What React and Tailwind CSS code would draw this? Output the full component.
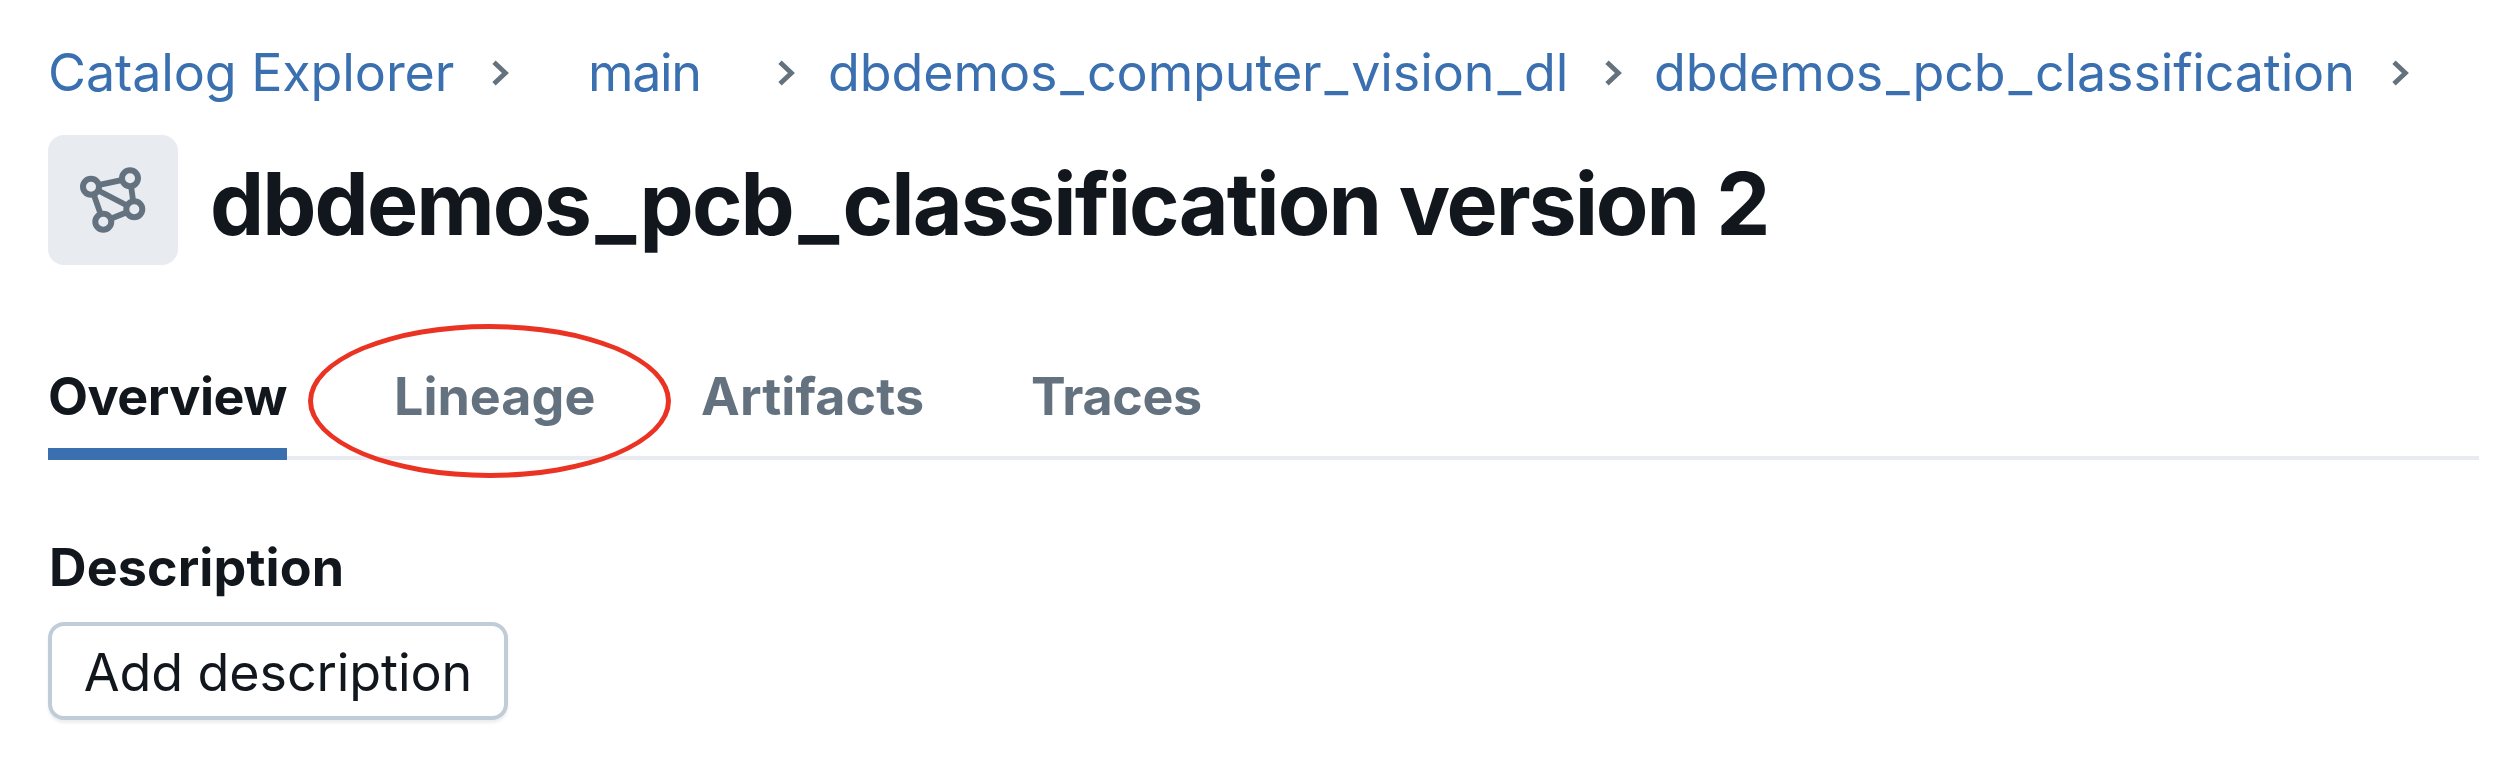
import { Fragment } from "react";

function Chevron() {
  return (
    <svg className="h-[26px] w-[18px] shrink-0" viewBox="0 0 18 26" fill="none" stroke="#64727d" strokeWidth="4.8">
      <path d="M2 2.2 13.4 13 2 23.8" />
    </svg>
  );
}

function ModelIcon() {
  return (
    <div className="h-[130px] w-[130px] shrink-0 rounded-[16px] bg-[#e8ecf0]">
      <svg viewBox="0 0 130 130" className="h-full w-full" stroke="#64727f" fill="none">
        <path strokeWidth="5.8" d="M43 51.7 82 43.3 86.3 74.3 55.3 86.7ZM43 51.7 86.3 74.3" />
        <g fill="#e8ecf0" strokeWidth="6">
          <circle cx="43" cy="51.7" r="8" />
          <circle cx="82" cy="43.3" r="8" />
          <circle cx="86.3" cy="74.3" r="8" />
          <circle cx="55.3" cy="86.7" r="8" />
        </g>
      </svg>
    </div>
  );
}

// Gives the underscores of an identifier a little room on both sides.
function Identifier({ name, gap }) {
  return name.split("_").map((part, i) => (
    <Fragment key={i}>
      {i > 0 && <span className={gap}>_</span>}
      {part}
    </Fragment>
  ));
}

export default function App() {
  return (
    <main className="h-[780px] w-[2512px] overflow-hidden bg-white pl-[48px] pr-[33px] font-['Inter','Liberation_Sans',sans-serif] text-[52px] text-[#11171c]">
      <nav className="flex h-[135px] items-center whitespace-nowrap pt-[10px] text-[#3a6fb0]">
        <a className="w-[444px] tracking-[-0.1px]">Catalog Explorer</a>
        <Chevron />
        <a className="ml-[78px] w-[190px] tracking-[-1.4px]">main</a>
        <Chevron />
        <a className="ml-[32px] w-[777px] tracking-[-0.1px]">
          <Identifier name="dbdemos_computer_vision_dl" gap="mx-[3px]" />
        </a>
        <Chevron />
        <a className="ml-[31px] w-[738px] tracking-[-0.15px]">
          <Identifier name="dbdemos_pcb_classification" gap="mx-[3px]" />
        </a>
        <Chevron />
      </nav>

      <header className="flex h-[130px] items-center">
        <ModelIcon />
        <h1 className="ml-[32px] whitespace-nowrap pt-[7px] text-[86px] font-bold leading-[104px] tracking-[-1.9px]">
          <Identifier name="dbdemos_pcb_classification" gap="mx-[5.3px]" />{" "}
          <span className="tracking-[-2.1px]">version 2</span>
        </h1>
      </header>

      <div className="mt-[71px] flex h-[124px] whitespace-nowrap border-b-4 border-[#e8ecf0] font-bold leading-[122px] text-[#64727f]">
        <div className="h-[124px] w-[239px] shrink-0 border-b-[12px] border-[#3a6fb0] text-[#11171c]">
          <span className="tracking-[-0.5px]">Overview</span>
        </div>
        <div className="relative ml-[107px] w-[200px]">
          <span className="tracking-[0px]">Lineage</span>
          <div className="absolute -left-[86px] -top-[12px] h-[154px] w-[363px] rounded-[50%] border-[5px] border-[#ea3323]" />
        </div>
        <div className="ml-[107px] w-[222px]">
          <span className="tracking-[0.1px]">Artifacts</span>
        </div>
        <div className="ml-[108px]">
          <span className="tracking-[-0.4px]">Traces</span>
        </div>
      </div>

      <section className="pt-[76px]">
        <h2 className="h-[86px] pl-px font-bold leading-[64px] tracking-[0.1px]">Description</h2>
        <button className="flex h-[98px] w-[460px] items-center justify-center whitespace-nowrap rounded-[16px] border-4 border-[#c0cdd8] bg-white pt-[3px] shadow-[0_3px_3px_rgba(0,0,0,0.07)]">
          <span className="tracking-[-0.1px]">Add description</span>
        </button>
      </section>
    </main>
  );
}
